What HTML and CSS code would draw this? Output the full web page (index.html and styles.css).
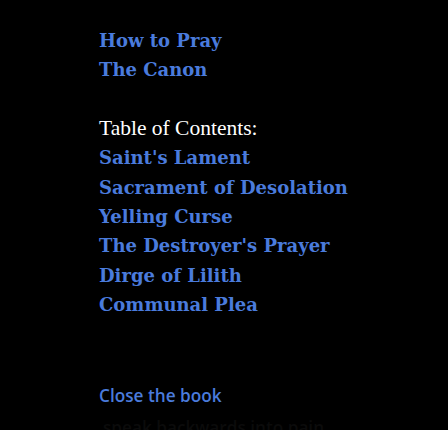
FILE: index.html
```html
<!doctype html>
<html lang="en">
    <head>
        <meta charset="UTF-8" />
        <meta name="viewport" content="width=device-width, initial-scale=1.0" />
        <title>Book</title>
        <link rel="stylesheet" href="styles.css">
    </head>
    <body>
        <div class="book">
            <nav class="links">
                <a href="#">How to Pray</a>
                <a href="#">The Canon</a>
            </nav>
            <div class="toc">
                <div class="toc-title">Table of Contents:</div>
                <a href="#">Saint's Lament</a>
                <a href="#">Sacrament of Desolation</a>
                <a href="#">Yelling Curse</a>
                <a href="#">The Destroyer's Prayer</a>
                <a href="#">Dirge of Lilith</a>
                <a href="#">Communal Plea</a>
            </div>
            <a class="close" href="#">Close the book</a>
            <p class="whisper">speak backwards into pain</p>
        </div>
    </body>
</html>
```

FILE: styles.css
```css
html {
    background-color: #000;
}
body {
    margin: 0;
    background-color: #000;
    color: #fff;
    font-family: "DejaVu Serif", Georgia, serif;
}
.book {
    display: flex;
    flex-direction: column;
    padding: 26px 0 40px 99px;
}
.links,
.toc {
    display: flex;
    flex-direction: column;
    align-items: flex-start;
}
.book a {
    color: #4a7bdc;
    text-decoration: none;
    font-weight: bold;
    font-size: 18px;
    line-height: 29.4px;
}
.toc {
    margin-top: 29px;
}
.toc-title {
    font-family: "Liberation Serif", serif;
    font-size: 21.5px;
    line-height: 29.4px;
}
.book a.close {
    align-self: flex-start;
    margin-top: 61px;
    font-family: "Open Sans", sans-serif;
    font-weight: 600;
    font-size: 17.2px;
}
.whisper {
    margin: 3px 0 0 4px;
    color: #0b0b0b;
    font-family: "Open Sans", sans-serif;
    font-weight: 600;
    font-size: 17.2px;
    line-height: 29.4px;
}
```
